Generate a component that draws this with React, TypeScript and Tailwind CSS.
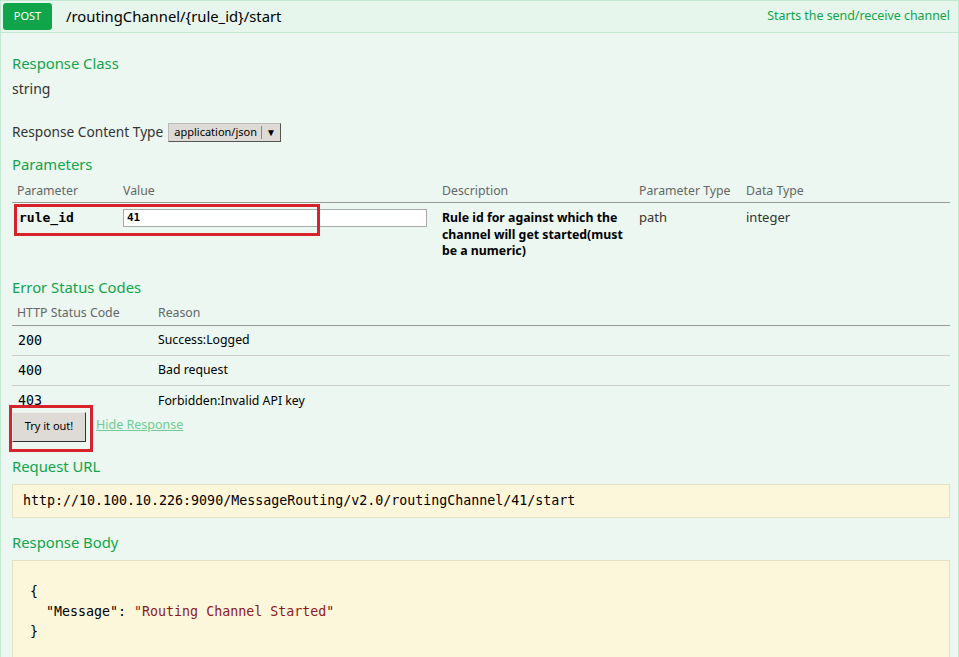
import React from "react";

const green = "text-[#10a54a]";

export default function App() {
  return (
    <div className="w-[959px] h-[657px] overflow-hidden bg-white font-['Noto_Sans',sans-serif] text-[#333]">
      {/* Header */}
      <div className="flex items-center h-[33px] bg-[#e7f6ec] border border-[#c3e8d1]">
        <div className="ml-[2px] w-[49px] h-[27px] rounded-[3px] bg-[#10a54a] text-white text-[11px] flex items-center justify-center">
          POST
        </div>
        <div className="ml-[14px] text-[14.8px] text-black">/routingChannel/{"{rule_id}"}/start</div>
        <div className={`ml-auto mr-[8px] text-[12.4px] ${green}`}>Starts the send/receive channel</div>
      </div>

      {/* Body */}
      <div className="bg-[#ebf7f0] border-x border-[#c3e8d1] pl-[11px] pr-[8px] h-[624px]">
        <h4 className={`pt-[19px] text-[14.8px] leading-[22px] ${green}`}>Response Class</h4>
        <div className="mt-[5px] text-[14px] leading-[20px]">string</div>

        <div className="mt-[23px] flex items-center h-[20px]">
          <span className="text-[13.7px] leading-[20px]">Response Content Type</span>
          <div className="ml-[5px] flex items-center h-[19px] bg-[#dedbd6] border border-[#bbb] border-b-[#555] border-r-[#555] text-[11px] text-black">
            <span className="pl-[5px] pr-[4px]">application/json</span>
            <span className="w-px h-[13px] bg-[#888]"></span>
            <span className="px-[4px] text-[10px]">▼</span>
          </div>
        </div>

        <h4 className={`mt-[11px] text-[14.8px] leading-[22px] ${green}`}>Parameters</h4>

        {/* Parameters table */}
        <div className="mt-[6px] w-[938px] text-[12.3px]">
          <div className="grid grid-cols-[111px_319px_197px_107px_1fr] h-[22px] items-center border-b border-[#999] text-[#666]">
            <div className="pl-[5px]">Parameter</div>
            <div>Value</div>
            <div>Description</div>
            <div>Parameter Type</div>
            <div>Data Type</div>
          </div>
          <div className="relative grid grid-cols-[111px_319px_197px_107px_1fr] pt-[6px]">
            <div className="pl-[7px] font-['DejaVu_Sans_Mono',monospace] font-bold text-[13px] text-black leading-[17px]">rule_id</div>
            <div>
              <div className="w-[304px] h-[18px] bg-white border border-[#aaa] flex items-center pl-[3px] font-['DejaVu_Sans_Mono',monospace] font-bold text-[11px] text-black">41</div>
            </div>
            <div className="pt-[1px] font-bold text-[12.3px] leading-[16.5px] text-black pr-[6px]">
              Rule id for against which the channel will get started(must be a numeric)
            </div>
            <div className="leading-[17px] text-[13px]">path</div>
            <div className="leading-[17px] text-[13px]">integer</div>
            <div className="absolute left-[2px] top-[1px] w-[306px] h-[32px] border-[3px] border-[#d8232a]"></div>
          </div>
        </div>

        <h4 className={`mt-[16px] text-[14.8px] leading-[22px] ${green}`}>Error Status Codes</h4>

        <div className="mt-[5px] w-[938px] text-[12.3px]">
          <div className="grid grid-cols-[146px_1fr] h-[23px] items-center border-b border-[#999] text-[#666]">
            <div className="pl-[5px]">HTTP Status Code</div>
            <div>Reason</div>
          </div>
          {[
            ["200", "Success:Logged"],
            ["400", "Bad request"],
            ["403", "Forbidden:Invalid API key"],
          ].map(([c, r], i) => (
            <div
              key={c}
              className={`grid grid-cols-[146px_1fr] h-[30px] items-center pt-[1px] ${i < 2 ? "border-b border-[#ccc]" : ""}`}
            >
              <div className="pl-[6px] font-['DejaVu_Sans_Mono',monospace] text-[13.3px] text-black">{c}</div>
              <div className="text-black">{r}</div>
            </div>
          ))}
        </div>

        <div className="relative -mt-[4px] flex items-start">
          <button className="w-[74px] h-[30px] bg-[#dedbd6] border border-[#eee] border-b-[#333] border-r-[#333] text-[11px] text-black">
            Try it out!
          </button>
          <a className="ml-[10px] mt-[4px] text-[12.5px] text-[#6fcb93] underline">Hide Response</a>
          <div className="absolute -left-[3px] -top-[7px] w-[84px] h-[47px] border-[3px] border-[#d8232a]"></div>
        </div>

        <h4 className={`mt-[13px] text-[14.8px] leading-[22px] ${green}`}>Request URL</h4>
        <div className="mt-[7px] w-[938px] h-[34px] bg-[#fcf6db] border border-[#e5e0c6] flex items-center pl-[10px] font-['DejaVu_Sans_Mono',monospace] text-[13.3px] text-black">
          http://10.100.10.226:9090/MessageRouting/v2.0/routingChannel/41/start
        </div>

        <h4 className={`mt-[13px] text-[14.8px] leading-[22px] ${green}`}>Response Body</h4>
        <div className="mt-[7px] w-[938px] h-[200px] bg-[#fcf6db] border border-[#e5e0c6] pt-[21px] pl-[17px] font-['DejaVu_Sans_Mono',monospace] text-[13.3px] text-black">
          <div className="leading-[20px]">{"{"}</div>
          <div className="leading-[20px]">
            <span className="pl-[16px]">"Message"</span>: <span className="text-[#8b1a1a]">"Routing Channel Started"</span>
          </div>
          <div className="leading-[20px]">{"}"}</div>
        </div>
      </div>
    </div>
  );
}
